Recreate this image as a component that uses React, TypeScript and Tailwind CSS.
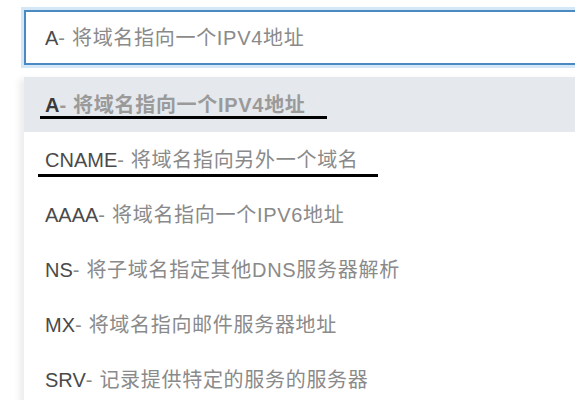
import React from "react";

const options = [
  { code: "A", desc: "将域名指向一个IPV4地址" },
  { code: "CNAME", desc: "将域名指向另外一个域名" },
  { code: "AAAA", desc: "将域名指向一个IPV6地址" },
  { code: "NS", desc: "将子域名指定其他DNS服务器解析" },
  { code: "MX", desc: "将域名指向邮件服务器地址" },
  { code: "SRV", desc: "记录提供特定的服务的服务器" },
];

const font = { fontFamily: '"Liberation Sans", "Noto Sans CJK SC", sans-serif' };

export default function App() {
  return (
    <div className="w-[575px] h-[400px] overflow-hidden bg-white pl-[24px] pt-[10px]" style={font}>
      <div className="w-[600px] h-[55px] border-2 border-[#4a89c2] ring-[3px] ring-[#d3e7f7] flex items-center px-[19px] text-[20px]">
        <span className="text-[#4a4a4a]">A</span>
        <span className="text-[#8a8a8a] tracking-[0.7px]">- 将域名指向一个IPV4地址</span>
      </div>

      <div className="mt-[12px] w-[600px] bg-white shadow-[-5px_2px_6px_rgba(0,0,0,0.07)]">
        {options.map((o, i) => (
          <div
            key={o.code}
            className={`relative h-[55px] flex items-center px-[21px] text-[20px] ${
              i === 0 ? "bg-[#e5e8ec] font-bold" : ""
            }`}
          >
            <span className={i === 0 ? "text-[#3a3a3a]" : "text-[#4a4a4a]"}>{o.code}</span>
            <span className={`tracking-[0.7px] ${i === 0 ? "text-[#9a9a9a]" : "text-[#8a8a8a]"}`}>
              - {o.desc}
            </span>
            {i === 0 && (
              <div className="absolute left-[16px] top-[39px] w-[287px] h-[3px] bg-black" />
            )}
            {i === 1 && (
              <div className="absolute left-[14px] top-[42px] w-[340px] h-[3px] bg-black" />
            )}
          </div>
        ))}
      </div>
    </div>
  );
}
